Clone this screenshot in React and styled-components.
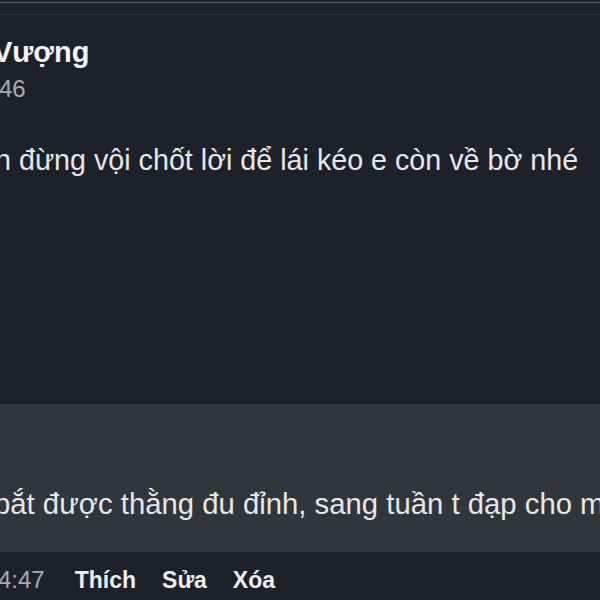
import React from 'react';
import styled, { createGlobalStyle } from 'styled-components';

const GlobalStyle = createGlobalStyle`
  html, body {
    margin: 0;
    padding: 0;
    background: #1e2129;
  }
  body {
    font-family: "Liberation Sans", Arial, sans-serif;
  }
  * {
    box-sizing: border-box;
  }
`;

const Page = styled.div`
  width: 600px;
  height: 600px;
  overflow: hidden;
  background: #1e2129;
  display: flex;
  flex-direction: column;
`;

const TopEdge = styled.div`
  height: 13px;
  margin-top: 2px;
  border-top: 1px solid #5d6168;
  border-bottom: 1px solid #2b2f37;
  background: #1f232a;
  flex-shrink: 0;
`;

const Comment = styled.div`
  display: flex;
  flex-direction: column;
  padding-top: 20px;
  height: 389px;
  flex-shrink: 0;
`;

const Line = styled.div`
  margin-left: ${(p) => p.shift || 0}px;
  white-space: nowrap;
`;

const Name = styled(Line)`
  font-size: 29px;
  line-height: 34px;
  font-weight: bold;
  color: #f2f3f5;
`;

const Time = styled(Line)`
  margin-top: 6px;
  font-size: 24px;
  line-height: 28px;
  color: #a7acb4;
`;

const Body = styled(Line)`
  margin-top: ${(p) => p.top || 0}px;
  font-size: ${(p) => p.size || 28.7}px;
  line-height: 34px;
  color: #e6e7e9;
`;

const ReplyPanel = styled.div`
  background: #31353c;
  height: 148px;
  padding-top: 83px;
  flex-shrink: 0;
`;

const Actions = styled.div`
  display: flex;
  align-items: baseline;
  gap: 26px;
  padding-top: 14px;
  white-space: nowrap;
`;

const Stamp = styled.span`
  margin-left: -2px;
  margin-right: 4px;
  font-size: 24px;
  line-height: 28px;
  color: #a7acb4;
`;

const Action = styled.span`
  font-size: 23px;
  line-height: 28px;
  font-weight: bold;
  color: #eceef0;
`;

export default function App() {
  return (
    <>
      <GlobalStyle />
      <Page>
        <TopEdge />
        <Comment>
          <Name shift={-7}>Vượng</Name>
          <Time shift={-1}>46</Time>
          <Body shift={-5} top={40}>
            n đừng vội chốt lời để lái kéo e còn về bờ nhé
          </Body>
        </Comment>
        <ReplyPanel>
          <Body shift={-6} size={29.3}>bắt được thằng đu đỉnh, sang tuần t đạp cho mày</Body>
        </ReplyPanel>
        <Actions>
          <Stamp>4:47</Stamp>
          <Action>Thích</Action>
          <Action>Sửa</Action>
          <Action>Xóa</Action>
        </Actions>
      </Page>
    </>
  );
}
